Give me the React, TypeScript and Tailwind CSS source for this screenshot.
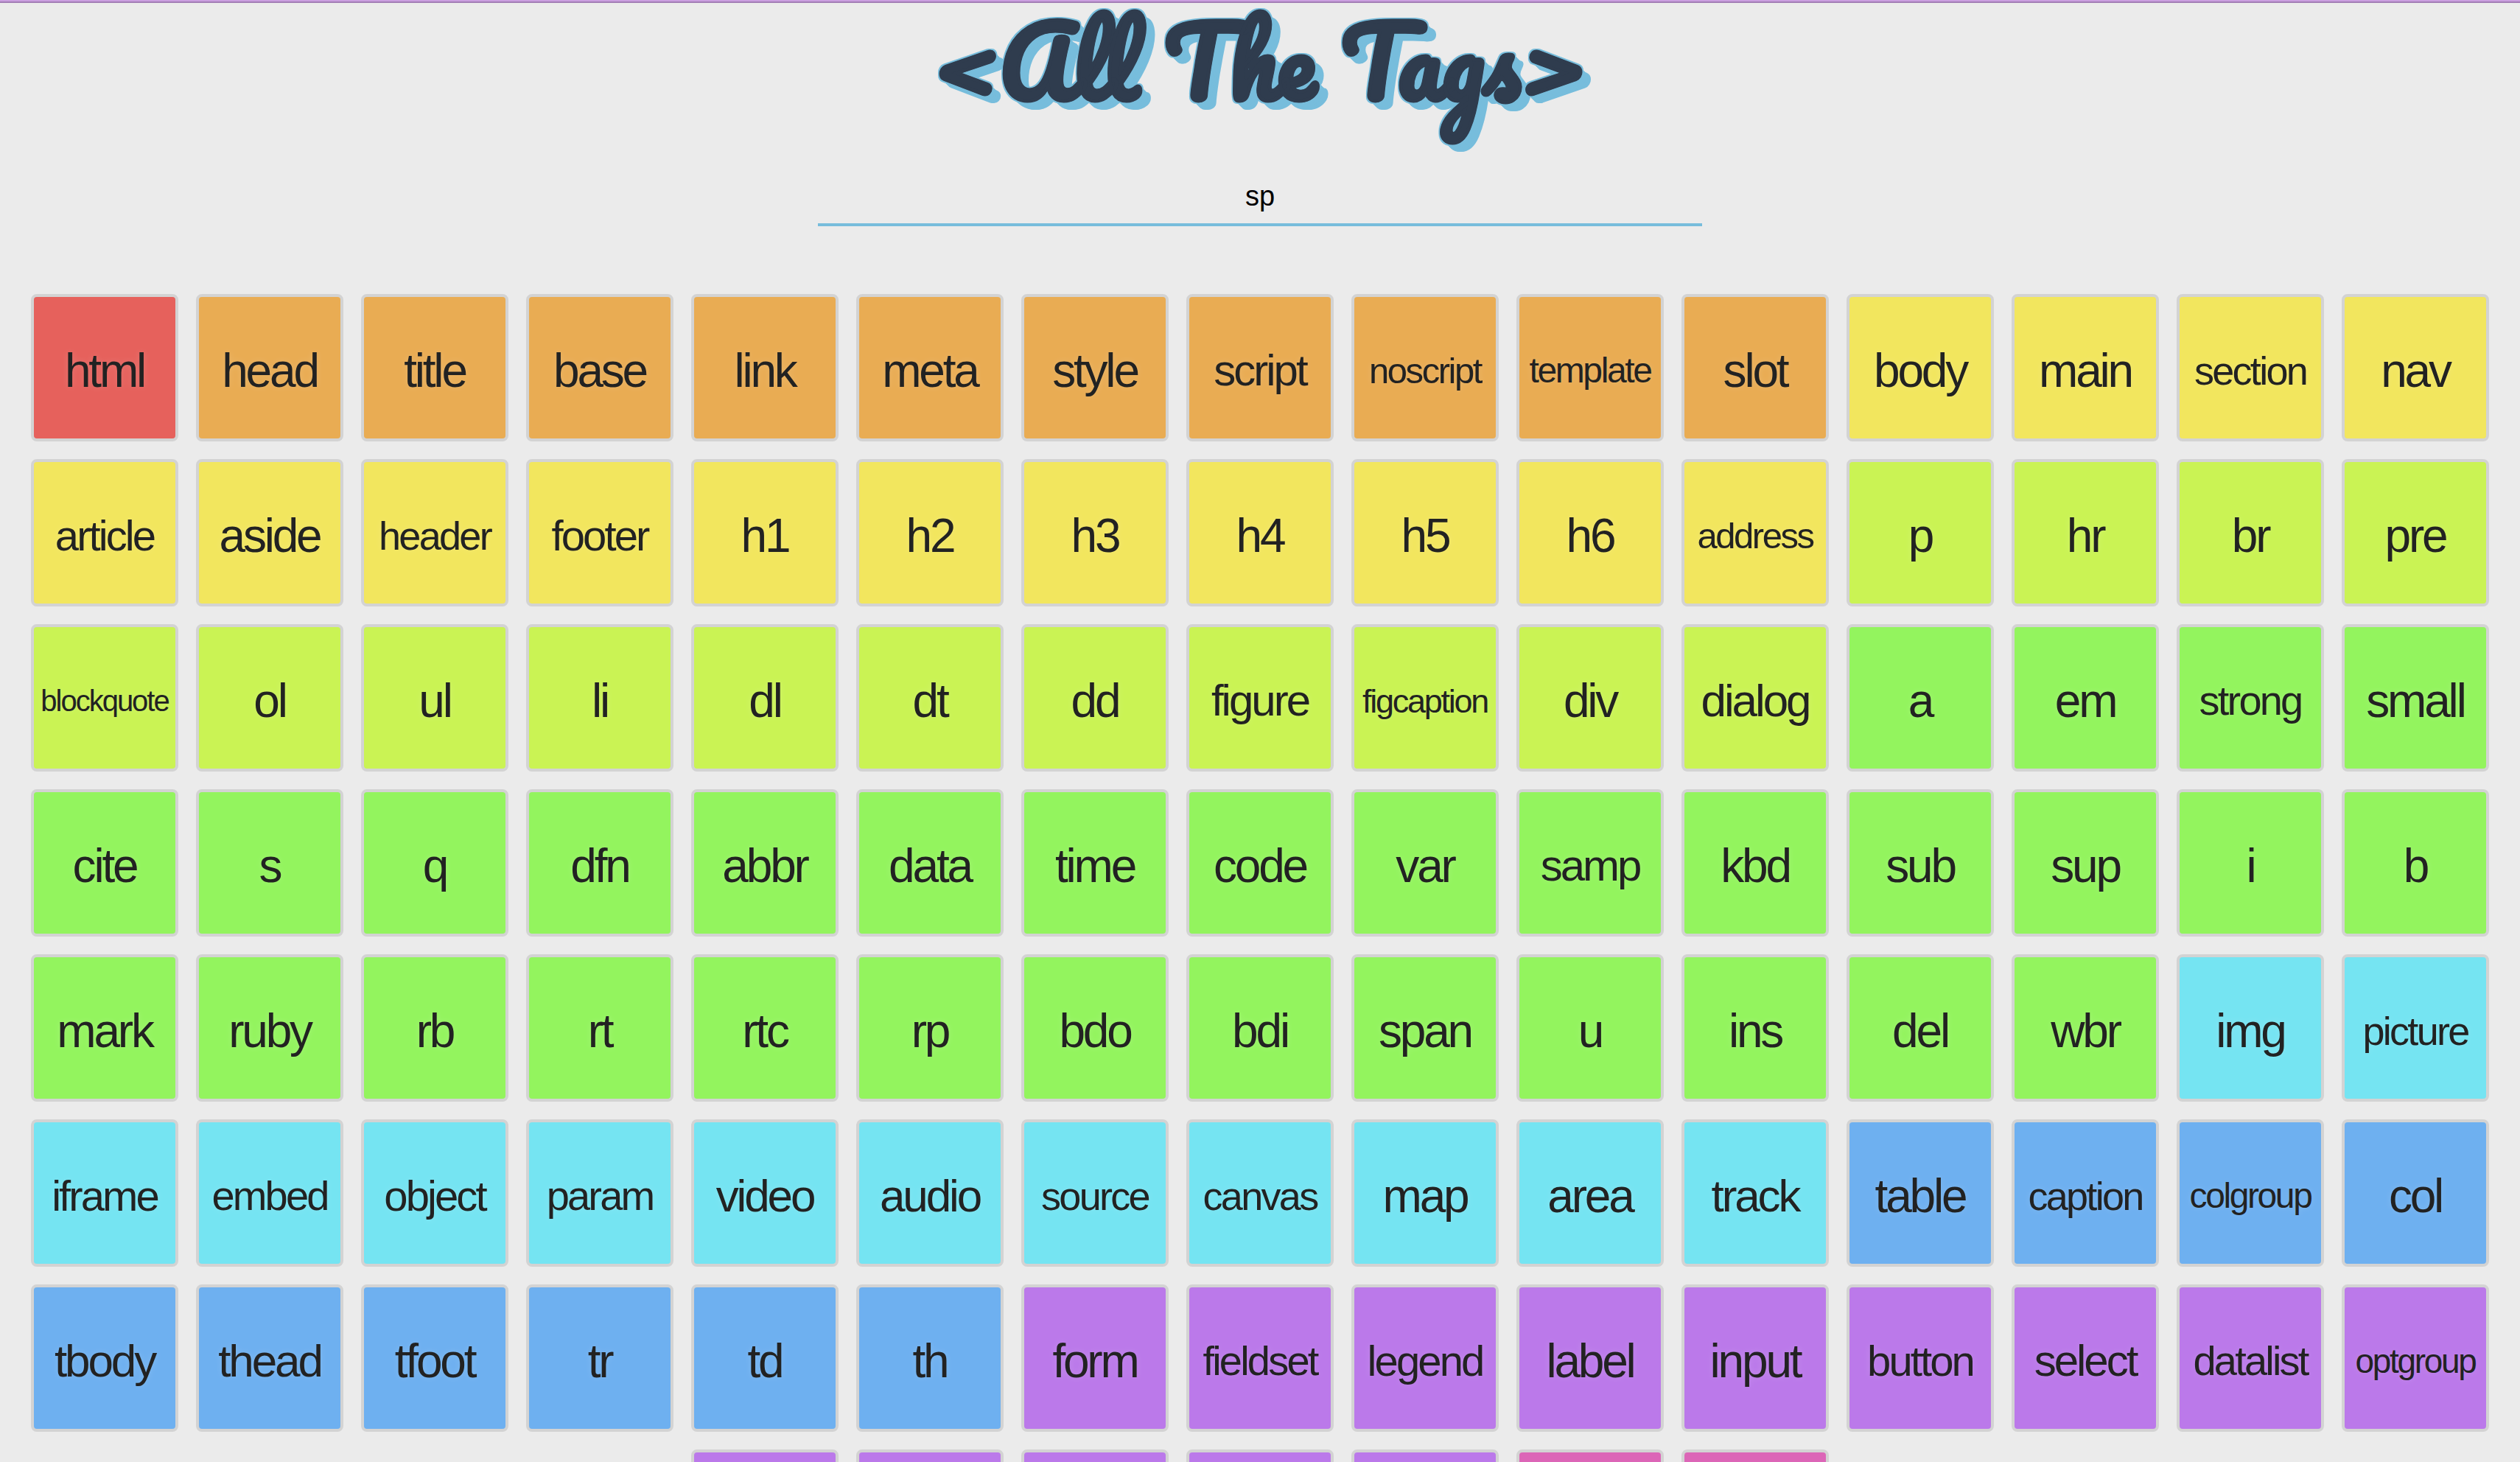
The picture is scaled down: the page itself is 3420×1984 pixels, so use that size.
import React from "react";
import clsx from "clsx";

type Group = { name: string; color: string; tags: string };

const groups: Group[] = [
  { name: "root", color: "bg-[#e6615c]", tags: "html" },
  { name: "metadata", color: "bg-[#e9ac53]", tags: "head title base link meta style script noscript template slot" },
  { name: "sectioning", color: "bg-[#f2e65e]", tags: "body main section nav article aside header footer h1 h2 h3 h4 h5 h6 address" },
  { name: "grouping", color: "bg-[#caf354]", tags: "p hr br pre blockquote ol ul li dl dt dd figure figcaption div dialog" },
  {
    name: "text",
    color: "bg-[#93f45e]",
    tags: "a em strong small cite s q dfn abbr data time code var samp kbd sub sup i b mark ruby rb rt rtc rp bdo bdi span u ins del wbr",
  },
  { name: "embedded", color: "bg-[#75e4f2]", tags: "img picture iframe embed object param video audio source canvas map area track" },
  { name: "tabular", color: "bg-[#6eb0f0]", tags: "table caption colgroup col tbody thead tfoot tr td th" },
  {
    name: "forms",
    color: "bg-[#bb79ea]",
    tags: "form fieldset legend label input button select datalist optgroup option textarea output progress meter",
  },
  { name: "interactive", color: "bg-[#dc66b7]", tags: "details summary" },
];

/* Longer names step down in size so that they stay inside their tile. */
const sizes: [string, string][] = [
  ["text-[40px]", "blockquote"],
  ["text-[45px]", "figcaption"],
  ["text-[46px]", "optgroup"],
  ["text-[48px]", "template colgroup textarea"],
  ["text-[49px]", "noscript address progress summary"],
  ["text-[54px]", "section header picture source canvas caption"],
  ["text-[56px]", "strong embed param fieldset datalist"],
  ["text-[58px]", "article footer iframe object legend button"],
  ["text-[60px]", "figure script select samp"],
  ["text-[62px]", "dialog tbody thead video audio track"],
];

function sizeOf(tag: string) {
  const match = sizes.find(([, tags]) => tags.split(" ").includes(tag));
  return match ? match[0] : "text-[64px]";
}

function Tile({ tag, color }: { tag: string; color: string }) {
  return (
    <li>
      <button
        type="button"
        className={clsx(
          "flex size-[200px] items-center justify-center rounded-lg border-4 border-[#d3d3d3] pt-2 leading-none tracking-tighter text-[#222222] [text-shadow:0_0_10px_rgba(255,255,255,0.15)]",
          color,
          sizeOf(tag),
        )}
      >
        {tag}
      </button>
    </li>
  );
}

export default function App() {
  return (
    <div className="h-screen overflow-y-auto bg-[#ebebeb] font-['Liberation_Sans',Arial,sans-serif] [scrollbar-width:none]">
      <div className="h-1 border-b-2 border-[#a37db5] bg-[#cb9fe0]" />
      <header className="flex flex-col items-center">
        <h1 className="h-[221px] whitespace-nowrap font-[Pacifico,Lato,sans-serif] text-[128px] leading-[156px] font-bold text-[#2f3c4e] [-webkit-text-stroke:1px_#2f3c4e] [text-shadow:-2px_-2px_#77bddc,2px_-2px_#77bddc,-2px_2px_#77bddc,2px_2px_#77bddc,4px_4px_#77bddc,6px_6px_#77bddc,8px_8px_#77bddc,10px_10px_#77bddc,12px_10px_#77bddc]">
          &lt;All The Tags&gt;
        </h1>
        <input
          type="text"
          aria-label="Filter tags"
          defaultValue="sp"
          className="h-[82px] w-full max-w-[1200px] border-b-4 border-[#77bddc] bg-transparent pt-1 text-center text-[38px] text-black outline-none"
        />
      </header>
      <main className="px-8 pt-[92px] pb-24">
        <ul className="flex flex-wrap justify-center gap-6">
          {groups.flatMap((group) =>
            group.tags.split(" ").map((tag) => <Tile key={group.name + tag} tag={tag} color={group.color} />),
          )}
        </ul>
      </main>
    </div>
  );
}
